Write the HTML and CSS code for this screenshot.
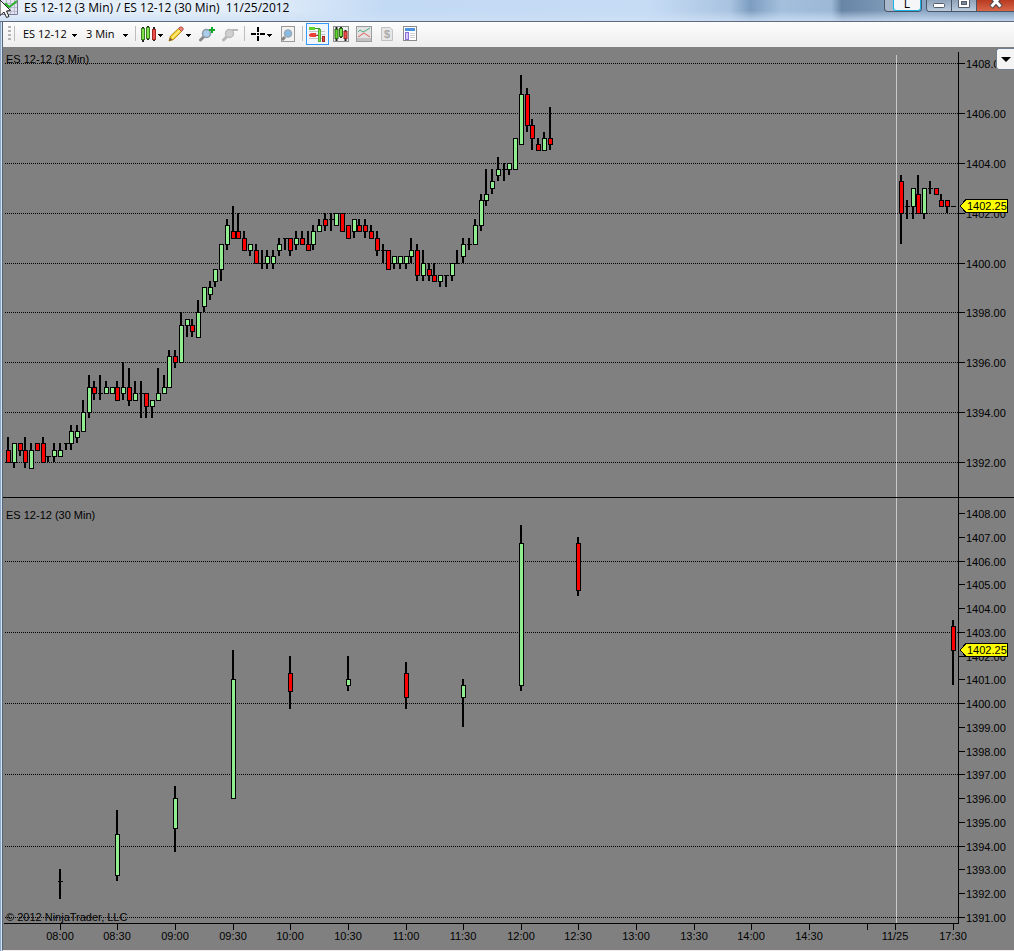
FILE: index.html
```html
<!DOCTYPE html>
<html lang="en">
<head>
    <meta charset="UTF-8">
    <meta name="viewport" content="width=device-width, initial-scale=1.0">
    <title>ES 12-12 (3 Min) / ES 12-12 (30 Min) 11/25/2012</title>
    <link rel="stylesheet" href="styles.css">
</head>
<body>
    <div class="window">
        <header class="titlebar">
            <svg class="app-icon" width="16" height="16" viewBox="0 0 16 16">
                <rect x="0" y="0" width="16" height="15" fill="#e4e4f0"/>
                <path d="M0 3.5H16M0 7.5H16M0 11.5H16M4.5 0V15M8.5 0V15M12.5 0V15" stroke="#b9b9cf"/>
                <path d="M0 8L4 4L7 7L10 5L15 1" fill="none" stroke="#27b027" stroke-width="2"/>
                <path d="M15.5 0V14.5H0" fill="none" stroke="#7c7c96"/>
            </svg>
            <h1 class="title">ES 12-12 (3 Min) / ES 12-12 (30 Min)&nbsp; 11/25/2012</h1>
            <div class="lang-bar"><span class="lang-key">L</span></div>
            <div class="window-buttons">
                <button class="win-btn" aria-label="Minimize">
                    <svg width="12" height="9" viewBox="0 0 12 9"><rect x=".5" y="3.5" width="11" height="4" rx="1" fill="#fff" stroke="#555c6c"/></svg>
                </button>
                <button class="win-btn" aria-label="Maximize">
                    <svg width="12" height="9" viewBox="0 0 12 9"><path d="M.5 -2H11.5V7.5H.5Z" fill="#fff" stroke="#555c6c"/><rect x="3.5" y="1.500" width="5" height="3" fill="#7d899b" stroke="#555c6c"/></svg>
                </button>
                <button class="win-btn close" aria-label="Close">
                    <svg width="14" height="9" viewBox="0 0 14 9"><path d="M2 -4L12 7M12 -4L2 7" stroke="#4b4450" stroke-width="5"/><path d="M2.500 -3.500L11.500 6.500M11.500 -3.500L2.500 6.500" stroke="#fff" stroke-width="3"/></svg>
                </button>
            </div>
        </header>

        <div class="toolbar">
            <span class="grip"></span>
            <span class="sep"></span>
            <select class="picker instrument" aria-label="Instrument"><option>ES 12-12</option></select>
            <select class="picker interval" aria-label="Interval"><option>3 Min</option></select>
            <span class="sep"></span>
            <button class="tool drop" aria-label="Chart style">
                <svg width="16" height="16" viewBox="0 0 16 16">
                    <path d="M3 1V16M8 0V14M14 1V15" stroke="#222" stroke-width="2"/>
                    <rect x="1.5" y="2.5" width="3" height="11" fill="#7ee04a" stroke="#3a7d22"/>
                    <rect x="6.5" y="1.5" width="3" height="11" fill="#7ee04a" stroke="#3a7d22"/>
                    <rect x="12.5" y="3.5" width="3" height="10" fill="#f0504a" stroke="#a02824"/>
                </svg>
            </button>
            <button class="tool drop" aria-label="Drawing tools">
                <svg width="16" height="16" viewBox="0 0 16 16">
                    <path d="M1 15L2.500 10L11 2L14 5L5.500 13.500Z" fill="#f5cf2c" stroke="#b98d16"/>
                    <path d="M4 12L12.500 3.500" stroke="#fff08a" stroke-width="1.500"/>
                    <path d="M10.500 2.500L12 1Q14 .5 15 2Q16 3.500 13.500 5.500Z" fill="#e9857a" stroke="#b5564e"/>
                    <path d="M1 15L2 11.500L4.500 14Z" fill="#7a5a35"/>
                </svg>
            </button>
            <button class="tool" aria-label="Zoom in">
                <svg width="16" height="16" viewBox="0 0 16 16">
                    <path d="M1.500 14L5 10.500" stroke="#8b8b8b" stroke-width="3" stroke-linecap="round"/>
                    <circle cx="7.500" cy="7.500" r="4" fill="#a9cdea" stroke="#8d9aa5" stroke-width="1.500"/>
                    <path d="M13 1V7M10 4H16" stroke="#10a828" stroke-width="2"/>
                </svg>
            </button>
            <button class="tool" aria-label="Zoom out" disabled>
                <svg width="16" height="16" viewBox="0 0 16 16">
                    <path d="M1.500 14L5 10.500" stroke="#b8b8b8" stroke-width="3" stroke-linecap="round"/>
                    <circle cx="7.500" cy="7.500" r="4" fill="#d0d0d0" stroke="#bcbcbc" stroke-width="1.500"/>
                    <path d="M10 4H16" stroke="#b9b9b9" stroke-width="2"/>
                </svg>
            </button>
            <span class="sep"></span>
            <button class="tool drop" aria-label="Crosshair">
                <svg width="16" height="16" viewBox="0 0 16 16">
                    <path d="M9 1V6M9 10V15M2 8H7M11 8H16" stroke="#000" stroke-width="2"/>
                    <rect x="8" y="7" width="2" height="2"/>
                </svg>
            </button>
            <button class="tool" aria-label="Data box">
                <svg width="16" height="16" viewBox="0 0 16 16">
                    <rect x="1.5" y=".5" width="13" height="15" fill="#f2f2f2" stroke="#9a9a9a"/>
                    <path d="M2 14L5 11" stroke="#858585" stroke-width="3"/>
                    <circle cx="8" cy="7.500" r="3.500" fill="#86bce8" stroke="#9aa7b5" stroke-width="1.500"/>
                </svg>
            </button>
            <span class="sep"></span>
            <button class="tool active" aria-label="Chart trader">
                <svg width="17" height="16" viewBox="0 0 17 16">
                    <path d="M0 5.5H16M1 8.5H16M0 12.5H16" stroke="#c4c4c4"/>
                    <path d="M0 1H6V4H0Z" fill="#5fd32c"/>
                    <path d="M6 2.5H11" stroke="#3c9c1c"/>
                    <path d="M0 8.500L2 7H7V11H2L0 10Z" fill="#ee3e35"/>
                    <path d="M7 9.5H9" stroke="#b02a24"/>
                    <rect x="9.5" y="3.5" width="2" height="12" fill="#7ee04a" stroke="#55a832"/>
                    <rect x="13.5" y="10.5" width="2" height="5" fill="#f0504a" stroke="#a02824"/>
                </svg>
            </button>
            <button class="tool" aria-label="Data series">
                <svg width="16" height="16" viewBox="0 0 16 16">
                    <rect x=".5" y=".5" width="15" height="15" fill="#eee" stroke="#8e8e8e"/>
                    <path d="M3.5 1V15M8 1V12M12.5 4V15" stroke="#222" stroke-width="2"/>
                    <rect x="2" y="3.5" width="3" height="9" fill="#5fd32c" stroke="#2c6f17"/>
                    <rect x="6.5" y="2.5" width="3" height="8" fill="#7ee04a" stroke="#2c6f17"/>
                    <rect x="11" y="5.5" width="3" height="7" fill="#f0504a" stroke="#a02824"/>
                </svg>
            </button>
            <button class="tool" aria-label="Indicators">
                <svg width="16" height="16" viewBox="0 0 16 16">
                    <rect x=".5" y=".5" width="15" height="15" fill="#e2e2e2" stroke="#9c9c9c"/>
                    <path d="M1 12H15V15H1Z" fill="#c2c2c2"/>
                    <path d="M2 6L4 4L7 6L10 4.500L14 2" fill="none" stroke="#4fae7c"/>
                    <path d="M2 11L5 9L8 7L11 9L14 11" fill="none" stroke="#e25d5d"/>
                </svg>
            </button>
            <button class="tool" aria-label="Strategies" disabled>
                <svg width="16" height="16" viewBox="0 0 16 16">
                    <path d="M2.5 1.5H11L13.500 4V14.5H2.5Z" fill="#e6e6e6" stroke="#c2c2c2"/>
                    <text x="8" y="12" class="dollar">$</text>
                </svg>
            </button>
            <button class="tool" aria-label="Properties">
                <svg width="16" height="16" viewBox="0 0 16 16">
                    <rect x="1.5" y=".5" width="13" height="14" fill="#fff" stroke="#8a8a8a"/>
                    <rect x="3" y="2" width="10" height="3" fill="#4c94e0"/>
                    <rect x="3.5" y="6.5" width="3" height="7" fill="#d5c8f8" stroke="#8d6fe0"/>
                    <path d="M8 7.5H13M8 9.5H13M8 11.5H13" stroke="#d0d0d0"/>
                </svg>
            </button>
        </div>

        <main class="chart">
            <svg class="panel panel-fast" id="panel3" role="img" aria-label="ES 12-12, 3 minute candles"></svg>
            <svg class="panel panel-slow" id="panel30" role="img" aria-label="ES 12-12, 30 minute candles"></svg>
            <svg class="time-axis" id="timeAxis"></svg>
            <button class="chart-menu" aria-label="Chart menu"></button>
        </main>
    </div>

    <svg class="cursor" width="12" height="20" viewBox="0 0 12 20">
        <path d="M0 0L10.500 10.500L6.500 11L9 16.500L6.500 17.500L4 12L0 15.500Z" fill="#fff" stroke="#222"/>
    </svg>

    <script src="chart.js"></script>
</body>
</html>
```
FILE: styles.css
```css
body {
    margin: 0;
    background: linear-gradient(to right, #8da8c8 0, #8da8c8 1px, #d5e2f0 1px, #d5e2f0 2px, #fff 2px);
    color: #000;
    font-family: "Open Sans", "Noto Sans", sans-serif;
    font-size: 11px;
    overflow: hidden;
}
button, select {
    font: inherit;
    color: inherit;
    border: none;
    background: none;
    padding: 0;
    margin: 0;
}
svg {
    display: block;
}
.window {
    display: flex;
    flex-direction: column;
    height: 100vh;
    box-sizing: border-box;
    margin-left: 2px;
    border-left: 1px solid #56657a;
    border-bottom: 1px solid #f2eef0;
}

/* Title bar */
.titlebar {
    display: flex;
    align-items: flex-start;
    flex: none;
    height: 22px;
    box-sizing: border-box;
    margin-left: -3px;
    padding-left: 2px;
    border-bottom: 1px solid #5f6b7c;
    background:
        linear-gradient(to bottom, transparent 50%, rgba(205, 224, 245, 0.75) 95%),
        linear-gradient(to right, #e6eff9 0, #e3eefa 25%, #c3daf4 38%, #c6dcf5 64%, #a9c3e0 72%, #7d9dc0 74%, #a3bfdc 77%, #9cb8d6 82%, #6885a6 83%, #8ba6c4 90%, #7895b5 100%);
}
.app-icon {
    flex: none;
}
.title {
    flex: 1;
    margin: 0 0 0 6px;
    font-size: 12px;
    font-weight: normal;
    line-height: 16px;
    white-space: nowrap;
}
.lang-bar {
    width: 38px;
    height: 12px;
    margin-right: 4px;
    box-sizing: border-box;
    padding-left: 8px;
    border: 1px solid #4a5568;
    border-top: none;
    border-radius: 0 0 4px 4px;
    background: #a9b9cb;
}
.lang-key {
    display: block;
    height: 10px;
    border: 1px solid #19b4e8;
    border-top: none;
    border-radius: 0 0 3px 3px;
    background: #f4f6f8;
    font-size: 12px;
    line-height: 7px;
    text-align: center;
}
.window-buttons {
    display: flex;
    height: 12px;
    box-sizing: border-box;
    border: 1px solid #4a5568;
    border-top: none;
    border-right: none;
    border-radius: 0 0 0 4px;
    overflow: hidden;
}
.win-btn {
    display: flex;
    justify-content: center;
    align-items: flex-start;
    width: 25px;
    border-right: 1px solid #4a5568;
    background: linear-gradient(#8fa3ba, #b9cadc);
}
.win-btn.close {
    width: 37px;
    border-right: none;
    background: linear-gradient(#b83a20, #d8674a);
}

/* Toolbar */
.toolbar {
    display: flex;
    align-items: center;
    flex: none;
    height: 23px;
    padding: 0 0 2px 5px;
    background: linear-gradient(#fdfdfd, #ededee);
}
.grip {
    width: 3px;
    height: 15px;
    background: repeating-linear-gradient(#b5b5b5 0, #b5b5b5 2px, transparent 2px, transparent 4px);
}
.sep {
    width: 1px;
    height: 15px;
    margin: 0 3px;
    background: #bdbdbd;
}
/* Small down arrows are stacked one pixel rows */
.picker, .tool.drop {
    background-image:
        linear-gradient(#000, #000),
        linear-gradient(#000, #000),
        linear-gradient(#000, #000);
    background-repeat: no-repeat;
    background-size: 5px 1px, 3px 1px, 1px 1px;
    background-position: right 4px top 11px, right 5px top 12px, right 6px top 13px;
}
.picker {
    appearance: none;
    height: 22px;
    padding-left: 5px;
}
.instrument {
    width: 63px;
}
.interval {
    width: 51px;
}
.tool {
    display: flex;
    align-items: center;
    justify-content: center;
    width: 23px;
    height: 22px;
    box-sizing: border-box;
}
.tool.drop {
    width: 28px;
    justify-content: flex-start;
    padding-left: 1px;
}
.tool.active {
    border: 1px solid #3399ff;
    background: #eef5fc;
}
.dollar {
    font: bold 11px "Liberation Sans", sans-serif;
    fill: #a8a8a8;
    text-anchor: middle;
}

/* Chart */
.chart {
    position: relative;
    display: flex;
    flex-direction: column;
    flex: 1;
    min-height: 0;
    background: #808080;
}
.panel {
    width: 100%;
    min-height: 0;
    flex-basis: 0;
    shape-rendering: crispEdges;
}
.panel-fast {
    flex-grow: 451;
}
.panel-slow {
    flex-grow: 425;
}
.time-axis {
    flex: none;
    width: 100%;
    height: 27px;
    shape-rendering: crispEdges;
}
.chart text {
    font: 11px "Liberation Sans", Arial, sans-serif;
    fill: #000;
}
.grid-line {
    stroke: #000;
    stroke-dasharray: 1 1;
}
.session {
    fill: #c8c8c8;
}
.up {
    fill: #90ee90;
}
.down {
    fill: #f00;
}
.marker {
    fill: #ff0;
    stroke: #000;
}
.time-label {
    text-anchor: middle;
}
.chart-menu {
    position: absolute;
    top: 1px;
    right: 0;
    width: 18px;
    height: 22px;
    box-sizing: border-box;
    border: 1px solid #707d8e;
    border-right: none;
    border-radius: 3px 0 0 3px;
    background: #f4f4f4;
}
.chart-menu::after {
    content: "";
    display: block;
    width: 0;
    margin: 0 auto;
    border: 5px solid transparent;
    border-top-color: #000;
    border-bottom: none;
}

.cursor {
    position: absolute;
    top: 0;
    left: 0;
}
```
FILE: chart.js
```js
const TICK = 0.25;
const BASE = 1392;
const AXIS_WIDTH = 56;  // room for the price labels
const SIDE_PAD = 5;
const LAST_SLOT = 164;  // 3 minute slots across the plot
const SESSION_SLOT = 154;

// [slot, open, high, low, close], prices in ticks from 1392
const bars3 = [
    [0,2,4,0,0],[1,0,3,-1,3],[2,3,3,1,2],[3,2,4,-1,0],[4,-1,3,-1,2],[5,3,3,2,2],[6,3,4,0,0],[7,1,1,0,1],
    [8,1,3,0,2],[9,1,3,1,2],[10,3,3,2,3],[11,3,6,2,5],[12,4,6,3,5],[13,5,10,5,8],[14,8,14,7,12],[15,12,13,10,11],
    [16,11,14,10,11],[17,11,13,11,12],[18,11,12,11,12],[19,12,13,10,10],[20,11,16,10,12],[21,12,15,9,10],
    [22,10,13,10,11],[23,11,13,7,11],[24,11,11,7,9],[25,9,10,7,10],[26,10,15,10,11],[27,11,14,11,12],
    [28,12,18,12,17],[29,17,18,15,16],[30,16,24,16,22],[31,22,23,20,23],[32,22,23,20,21],[33,20,26,20,24],
    [34,25,28,24,28],[35,27,29,26,28],[36,29,31,28,31],[37,31,35,29,35],[38,35,39,34,38],[39,37,41,36,36],
    [40,37,40,36,36],[41,36,37,34,34],[42,34,35,33,35],[43,34,35,32,32],[44,32,34,31,32],[45,32,34,31,33],
    [46,32,34,31,33],[47,34,36,33,35],[48,36,36,34,36],[49,36,36,33,34],[50,35,37,34,36],[51,36,37,35,35],
    [52,35,37,34,34],[53,35,38,34,37],[54,37,39,37,38],[55,39,40,37,38],[56,39,40,37,39],[57,38,40,38,40],
    [58,40,40,37,37],[59,38,38,36,36],[60,37,39,36,39],[61,38,39,37,37],[62,38,39,36,37],[63,37,38,36,36],
    [64,36,37,33,34],[65,34,35,32,34],[66,34,34,31,31],[67,32,33,31,33],[68,32,33,31,33],[69,32,33,31,33],
    [70,33,36,32,34],[71,34,35,29,30],[72,30,34,29,32],[73,31,32,29,30],[74,30,32,29,29],[75,29,30,28,30],
    [76,30,30,28,30],[77,30,32,29,32],[78,32,34,32,32],[79,33,36,32,35],[80,35,36,34,35],[81,35,39,35,38],
    [82,38,43,37,42],[83,42,47,41,43],[84,44,47,43,45],[85,46,49,45,47],[86,47,48,45,47],[87,47,48,46,48],
    [88,47,52,47,52],[89,51,62,51,59],[90,59,60,53,54],[91,54,55,50,52],[92,51,52,50,50],[93,50,53,50,52],
    [94,52,57,50,51],
    [155,45,46,35,40],[156,41,42,39,41],[157,41,44,39,44],[158,43,46,40,40],[159,40,44,39,44],[160,44,45,43,44],
    [161,44,44,43,43],[162,42,43,41,41],[163,42,42,40,41],[164,41,41,41,41]
];

const bars30 = [
    [9,2,4,-1,2],[19,3,14,2,10],[29,11,18,7,16],[39,16,41,16,36],[49,37,40,31,34],[59,35,40,34,36],
    [69,37,39,31,33],[79,33,36,28,35],[89,35,62,34,59],[99,59,60,50,51],[164,45,46,35,41]
];

const timeLabels = [
    [9,'08:00'],[19,'08:30'],[29,'09:00'],[39,'09:30'],[49,'10:00'],[59,'10:30'],[69,'11:00'],[79,'11:30'],
    [89,'12:00'],[99,'12:30'],[109,'13:00'],[119,'13:30'],[129,'14:00'],[139,'14:30'],[149,''],[154,'11/25'],[164,'17:30']
];

function add(svg, name, attrs, text) {
    const el = document.createElementNS('http://www.w3.org/2000/svg', name);
    for (const key in attrs) el.setAttribute(key, attrs[key]);
    if (text) el.textContent = text;
    svg.appendChild(el);
    return el;
}

function rect(svg, x, y, width, height, cls) {
    return add(svg, 'rect', { x, y, width, height, class: cls || '' });
}

function slotX(slot, plotWidth) {
    return Math.round(SIDE_PAD + slot * (plotWidth - 2 * SIDE_PAD) / LAST_SLOT);
}

function drawPanel(id, bars, opt) {
    const svg = document.getElementById(id);
    svg.innerHTML = '';
    const width = Math.round(svg.getBoundingClientRect().width);
    const height = Math.round(svg.getBoundingClientRect().height);
    const plot = width - AXIS_WIDTH;
    const y = price => Math.round(opt.top + (opt.max - price) / (opt.max - opt.min) * (height - opt.top - opt.bottom));

    // Grid
    for (let p = opt.min; p <= opt.max; p += opt.grid) {
        add(svg, 'line', { x1: 2, x2: plot, y1: y(p) + 0.5, y2: y(p) + 0.5, class: 'grid-line' });
    }
    rect(svg, slotX(SESSION_SLOT, plot) + 1, opt.axisTop ? 8 : 0, 1, height, 'session');

    // Candles
    bars.forEach(([slot, o, h, l, c]) => {
        const x = slotX(slot, plot);
        const at = t => y(BASE + t * TICK);
        if (h > l) rect(svg, x - 1, at(h), 2, at(l) - at(h));
        if (o === c) {
            rect(svg, x - 2, at(o), 5, 1);
        } else {
            const top = at(Math.max(o, c));
            const bottom = at(Math.min(o, c));
            rect(svg, x - 2, top, 5, bottom - top + 1);
            rect(svg, x - 1, top + 1, 3, bottom - top - 1, c > o ? 'up' : 'down');
        }
    });

    // Price axis
    rect(svg, plot, opt.axisTop, 1, height);
    for (let p = opt.min; p <= opt.max; p += opt.label) {
        rect(svg, plot + 1, y(p), 6, 1);
        add(svg, 'text', { x: plot + 8, y: y(p) + 5 }, p.toFixed(2));
    }

    // Last price
    const last = y(1402.25);
    add(svg, 'path', { d: `M${plot + 2} ${last}L${plot + 8} ${last - 6.5}H${plot + 49.5}V${last + 6.5}H${plot + 8}Z`, class: 'marker' });
    add(svg, 'text', { x: plot + 9, y: last + 4 }, '1402.25');

    add(svg, 'text', { x: 3, y: opt.titleY }, opt.title);
    if (opt.footer) add(svg, 'text', { x: 3, y: height - 2 }, opt.footer);
    if (opt.divider) rect(svg, 0, height - 1, width, 1);
}

function drawTimeAxis() {
    const svg = document.getElementById('timeAxis');
    svg.innerHTML = '';
    const plot = Math.round(svg.getBoundingClientRect().width) - AXIS_WIDTH;
    rect(svg, 1, 0, plot, 1);
    timeLabels.forEach(([slot, label]) => {
        const x = slotX(slot, plot);
        rect(svg, x, 1, 1, 6);
        if (label) add(svg, 'text', { x: x, y: 17, class: 'time-label' }, label);
    });
}

function draw() {
    drawPanel('panel3', bars3, {
        min: 1392, max: 1408, grid: 2, label: 2, top: 16, bottom: 36,
        axisTop: 5, title: 'ES 12-12 (3 Min)', titleY: 16, divider: true
    });
    drawPanel('panel30', bars30, {
        min: 1391, max: 1408, grid: 3, label: 1, top: 15, bottom: 6,
        axisTop: 0, title: 'ES 12-12 (30 Min)', titleY: 21, footer: '© 2012 NinjaTrader, LLC'
    });
    drawTimeAxis();
}

window.addEventListener('resize', draw);
draw();
```
